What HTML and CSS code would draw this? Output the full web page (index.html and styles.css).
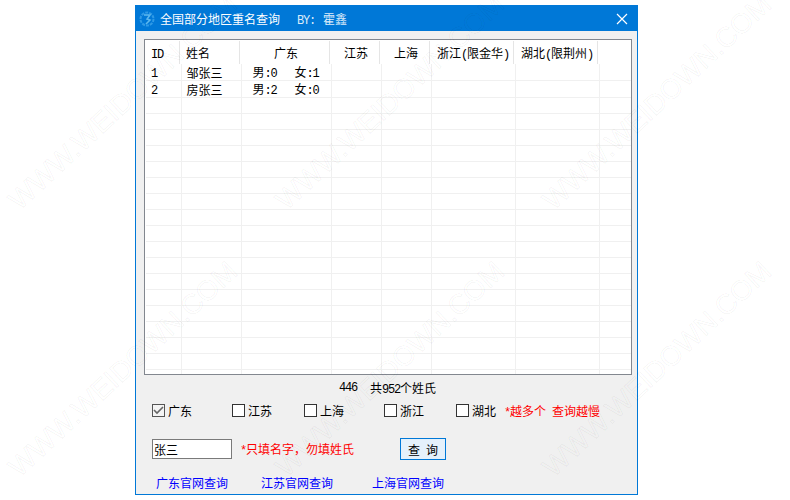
FILE: index.html
```html
<!DOCTYPE html>
<html lang="zh">
<head>
<meta charset="utf-8">
<title>全国部分地区重名查询</title>
<link rel="stylesheet" href="styles.css">
</head>
<body>
<main class="window">
  <header class="titlebar">
    <svg class="app-icon" width="16" height="18" viewBox="0 0 16 18"><circle cx="8" cy="9" r="6.5" fill="none" stroke="#2f9ae6" stroke-width="2" stroke-dasharray="3 1"/><path d="M5 5h6L8 9l3 1-4 4" fill="none" stroke="#5db8ee" stroke-width="1.5"/></svg>
    <span class="title-text">全国部分地区重名查询</span>
    <span class="title-by"><span class="m">BY:</span><span class="by-gap"></span>霍鑫</span>
    <svg class="close" width="12" height="12" viewBox="0 0 12 12"><path d="M1 1l10 10M11 1L1 11" stroke="#fff" stroke-width="1.2"/></svg>
  </header>
  <div class="body">
    <section class="list">
      <table class="grid">
        <colgroup><col class="c1"><col class="c2"><col class="c3"><col class="c4"><col class="c5"><col class="c6"><col class="c7"><col></colgroup>
        <thead><tr><th class="left"><span class="m">ID</span></th><th class="left">姓名</th><th>广东</th><th>江苏</th><th>上海</th><th>浙江<span class="m">(</span>限金华<span class="m">)</span></th><th>湖北<span class="m">(</span>限荆州<span class="m">)</span></th><th></th></tr></thead>
        <tbody>
          <tr><td><span class="m">1</span></td><td>邹张三</td><td class="gd">男<span class="m">:0</span><i></i>女<span class="m">:1</span></td><td></td><td></td><td></td><td></td><td></td></tr>
          <tr><td><span class="m">2</span></td><td>房张三</td><td class="gd">男<span class="m">:2</span><i></i>女<span class="m">:0</span></td><td></td><td></td><td></td><td></td><td></td></tr>
          <tr><td></td><td></td><td></td><td></td><td></td><td></td><td></td><td></td></tr>
          <tr><td></td><td></td><td></td><td></td><td></td><td></td><td></td><td></td></tr>
          <tr><td></td><td></td><td></td><td></td><td></td><td></td><td></td><td></td></tr>
          <tr><td></td><td></td><td></td><td></td><td></td><td></td><td></td><td></td></tr>
          <tr><td></td><td></td><td></td><td></td><td></td><td></td><td></td><td></td></tr>
          <tr><td></td><td></td><td></td><td></td><td></td><td></td><td></td><td></td></tr>
          <tr><td></td><td></td><td></td><td></td><td></td><td></td><td></td><td></td></tr>
          <tr><td></td><td></td><td></td><td></td><td></td><td></td><td></td><td></td></tr>
          <tr><td></td><td></td><td></td><td></td><td></td><td></td><td></td><td></td></tr>
          <tr><td></td><td></td><td></td><td></td><td></td><td></td><td></td><td></td></tr>
          <tr><td></td><td></td><td></td><td></td><td></td><td></td><td></td><td></td></tr>
          <tr><td></td><td></td><td></td><td></td><td></td><td></td><td></td><td></td></tr>
          <tr><td></td><td></td><td></td><td></td><td></td><td></td><td></td><td></td></tr>
          <tr><td></td><td></td><td></td><td></td><td></td><td></td><td></td><td></td></tr>
          <tr><td></td><td></td><td></td><td></td><td></td><td></td><td></td><td></td></tr>
          <tr><td></td><td></td><td></td><td></td><td></td><td></td><td></td><td></td></tr>
          <tr><td></td><td></td><td></td><td></td><td></td><td></td><td></td><td></td></tr>
          <tr class="tail"><td></td><td></td><td></td><td></td><td></td><td></td><td></td><td></td></tr>
        </tbody>
      </table>
    </section>
    <p class="count"><span class="m">446</span><span>共<span class="m">952</span>个姓氏</span></p>
    <div class="checks">
      <label class="check c-gd"><span class="box box-on"><svg width="11" height="9" viewBox="0 0 11 9"><path d="M1 4l3 3 6-6" fill="none" stroke="#666" stroke-width="1.6"/></svg></span>广东</label>
      <label class="check c-js"><span class="box"></span>江苏</label>
      <label class="check c-sh"><span class="box"></span>上海</label>
      <label class="check c-zj"><span class="box"></span>浙江</label>
      <label class="check c-hb"><span class="box"></span>湖北</label>
      <span class="warn"><span class="m">*</span>越多个<span class="gap"></span>查询越慢</span>
    </div>
    <div class="query">
      <input class="name" type="text" value="张三">
      <span class="warn hint"><span class="m">*</span>只填名字，勿填姓氏</span>
      <button class="btn" type="button">查<span class="gap"></span>询</button>
    </div>
    <nav class="links">
      <a class="l1">广东官网查询</a>
      <a class="l2">江苏官网查询</a>
      <a class="l3">上海官网查询</a>
    </nav>
  </div>
</main>
<div class="wm w1">WWW.WEIDOWN.COM</div>
<div class="wm w2">WWW.WEIDOWN.COM</div>
<div class="wm w3">WWW.WEIDOWN.COM</div>
<div class="wm w4">WWW.WEIDOWN.COM</div>
<div class="wm w5">WWW.WEIDOWN.COM</div>
<div class="wm w6">WWW.WEIDOWN.COM</div>
</body>
</html>
```
FILE: styles.css
```css
* { box-sizing: border-box; }
html, body { margin: 0; height: 100%; }
body {
  background: #fff;
  padding: 5px 0 0 135px;
  overflow: hidden;
  position: relative;
  font-family: "Noto Sans CJK SC", "Liberation Sans", sans-serif;
  font-size: 12px;
  color: #000;
}
.m { font-family: "Liberation Mono", monospace; letter-spacing: -1.2px; }
.gap { display: inline-block; width: 6px; }
.by-gap { display: inline-block; width: 8px; }
.window {
  width: 503px;
  height: 490px;
  border: 1px solid #0078d7;
  background: #f0f0f0;
  display: flex;
  flex-direction: column;
}
.titlebar {
  height: 25px;
  flex: none;
  background: #0078d7;
  color: #fff;
  display: flex;
  align-items: center;
  padding-left: 3px;
  font-size: 12px;
}
.app-icon { flex: none; }
.title-text { margin-left: 5px; }
.title-by { margin-left: 17px; color: #dcecfa; }
.close { margin-left: auto; margin-right: 9px; }
.body { flex: 1; padding: 8px 5px 0 8px; display: flex; flex-direction: column; }
.list {
  height: 336px;
  flex: none;
  background: #fff;
  border: 1px solid #82878f;
  overflow: hidden;
  padding-left: 1px;
}
.grid { border-collapse: collapse; table-layout: fixed; width: 485px; }
.c1 { width: 35px; }
.c2 { width: 60px; }
.c3 { width: 90px; }
.c4 { width: 50px; }
.c5 { width: 50px; }
.c6 { width: 84px; }
.c7 { width: 84px; }
th {
  height: 24px;
  padding: 1px 0 0;
  font-weight: 400;
  text-align: center;
  font-size: 12px;
  background: linear-gradient(#e5e5e5, #e5e5e5) no-repeat calc(100% - 1px) 1px / 1px 100%;
  white-space: nowrap;
}
th:last-child { background: none; }
th.left { text-align: left; padding-left: 5px; }
td {
  height: 16px;
  padding: 2px 0 0 5px;
  line-height: 12px;
  font-size: 12px;
  border-right: 1px solid #f0f0f0;
  border-bottom: 1px solid #f0f0f0;
  white-space: nowrap;
}
td:last-child { border-right: 0; }
td.gd { padding-left: 11px; }
td.gd i { display: inline-block; width: 18px; }
.tail td { height: 6px; padding: 0; border-bottom: 0; }
.count { margin: 6px 0 0; height: 14px; line-height: 14px; padding-left: 195px; display: flex; gap: 13px; font-size: 12px; flex: none; }
.checks { height: 15px; margin-top: 8px; display: flex; align-items: center; padding-left: 8px; flex: none; }
.check { display: inline-flex; align-items: center; gap: 3px; line-height: 14px; flex: none; }
.c-gd { width: 80px; }
.c-js { width: 72px; }
.c-sh { width: 80px; }
.c-zj { width: 72px; }
.c-hb { width: 48px; }
.box {
  width: 13px;
  height: 13px;
  flex: none;
  background: #fff;
  border: 1px solid #333;
  display: inline-flex;
  align-items: center;
  justify-content: center;
}
.box-on { background: #f4f4f4; border-color: #555; }
.warn { color: #f00; }
.query { display: flex; align-items: center; height: 22px; margin-top: 20px; padding-left: 8px; flex: none; }
.name {
  width: 80px;
  height: 20px;
  border: 1px solid #7a7a7a;
  background: #fff;
  font: inherit;
  padding: 0 1px;
  color: #000;
}
.hint { margin-left: 8px; width: 160px; }
.btn {
  width: 46px;
  height: 22px;
  border: 1px solid #0078d7;
  background: #e5f1fb;
  font: inherit;
  padding: 0;
  color: #000;
}
.links { display: flex; margin-top: 16px; padding-left: 12px; color: #00f; height: 14px; line-height: 14px; flex: none; }
.l1 { width: 105px; }
.l2 { width: 111px; }
.wm {
  position: absolute;
  font-family: "Liberation Sans", sans-serif;
  font-size: 28px;
  line-height: 28px;
  white-space: nowrap;
  color: transparent;
  -webkit-text-stroke: 1px rgba(0,0,0,.045);
  transform: rotate(-43deg);
  transform-origin: 0 100%;
  pointer-events: none;
}
.w1 { left: 23px; top: 187px; }
.w2 { left: 290px; top: 187px; }
.w3 { left: 557px; top: 187px; }
.w4 { left: 23px; top: 454px; }
.w5 { left: 290px; top: 454px; }
.w6 { left: 557px; top: 454px; }
```
